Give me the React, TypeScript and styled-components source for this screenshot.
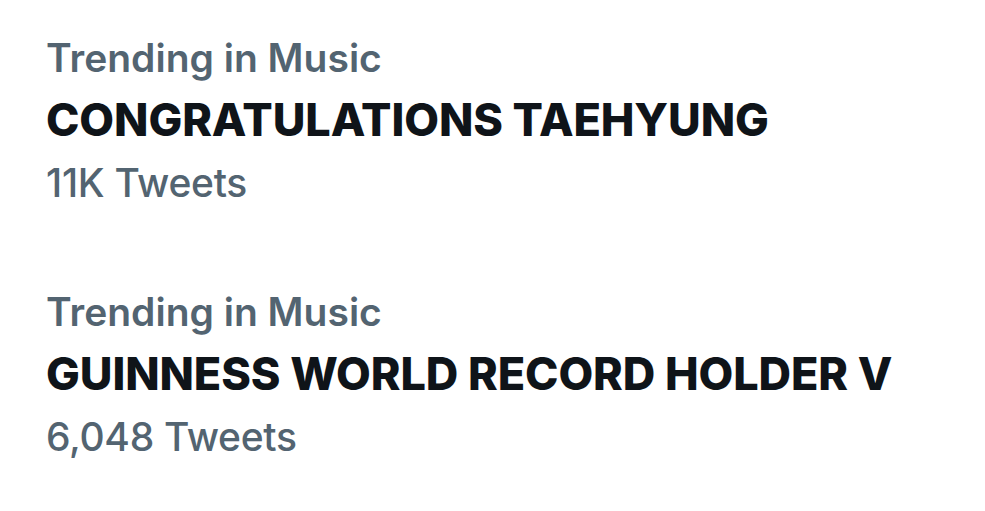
import React from "react";
import styled, { createGlobalStyle } from "styled-components";

const GlobalStyle = createGlobalStyle`
  html, body {
    margin: 0;
    padding: 0;
    background: #ffffff;
  }
  body {
    font-family: Inter, "Noto Sans", "Liberation Sans", sans-serif;
    -webkit-font-smoothing: antialiased;
  }
`;

const trends = [
  { context: "Trending in Music", title: "CONGRATULATIONS TAEHYUNG", count: "11K Tweets" },
  { context: "Trending in Music", title: "GUINNESS WORLD RECORD HOLDER V", count: "6,048 Tweets" },
];

const List = styled.section`
  width: 985px;
  height: 511px;
  overflow: hidden;
  display: flex;
  flex-direction: column;
`;

const Trend = styled.article`
  display: flex;
  flex-direction: column;
  padding: 34px 48px 47px 46px;
`;

const Context = styled.span`
  color: #536471;
  font-size: 39px;
  line-height: 48px;
  font-weight: 600;
`;

const Title = styled.span`
  color: #0f1419;
  font-size: 45px;
  line-height: 60px;
  font-weight: 800;
  letter-spacing: -0.1px;
  padding-top: 8px;
`;

const Count = styled.span`
  color: #536471;
  font-size: 39px;
  line-height: 48px;
  font-weight: 500;
  letter-spacing: -0.3px;
  margin-top: 9px;
`;

export default function App() {
  return (
    <>
      <GlobalStyle />
      <List>
        {trends.map((t) => (
          <Trend key={t.title}>
            <Context>{t.context}</Context>
            <Title>{t.title}</Title>
            <Count>{t.count}</Count>
          </Trend>
        ))}
      </List>
    </>
  );
}
